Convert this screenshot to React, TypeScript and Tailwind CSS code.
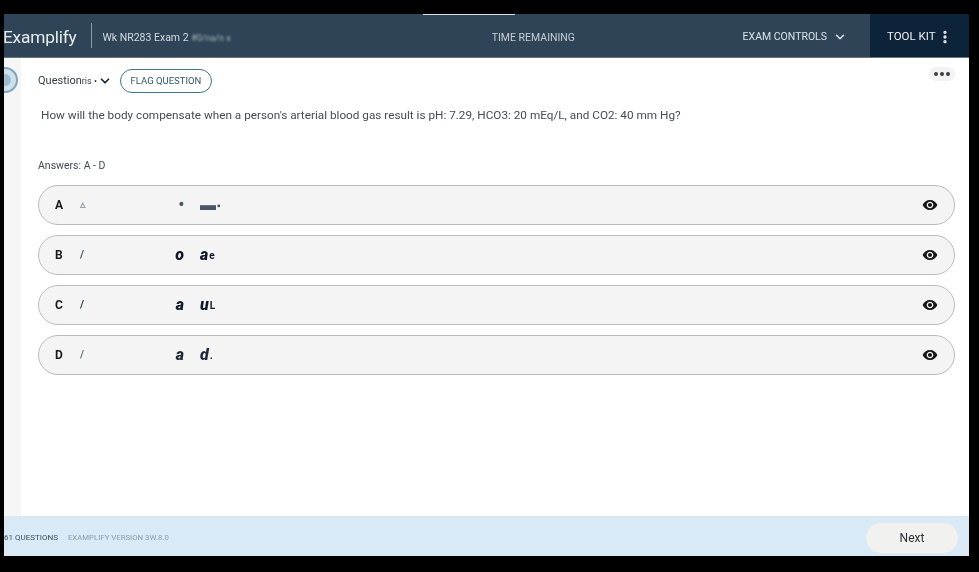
import { ChevronDown, EllipsisVertical } from "lucide-react";

const rows = [
  { l: "A", m: "▵", a: "•", b: "▬", c: "▪", mc: "text-gray-400", sm: "text-gray-600" },
  { l: "B", m: "/", a: "o", b: "a", c: "e", mc: "text-gray-600", sm: "text-gray-900" },
  { l: "C", m: "/", a: "a", b: "u", c: "L", mc: "text-gray-700", sm: "text-gray-900" },
  { l: "D", m: "/", a: "a", b: "d", c: ".", mc: "text-gray-500", sm: "text-gray-800" },
];

function EyeIcon() {
  return (
    <svg className="ml-auto w-[16px] h-[16px] text-[#161616]" viewBox="0 0 24 24" fill="currentColor">
      <path d="M12 4.5C7 4.5 2.73 7.61 1 12c1.73 4.39 6 7.5 11 7.5s9.27-3.11 11-7.5c-1.73-4.39-6-7.5-11-7.5zM12 17c-2.76 0-5-2.24-5-5s2.24-5 5-5 5 2.24 5 5-2.24 5-5 5zm0-8c-1.66 0-3 1.34-3 3s1.34 3 3 3 3-1.34 3-3-1.34-3-3-3z" />
    </svg>
  );
}

function Row({ r }: { r: (typeof rows)[number] }) {
  return (
    <div className="h-10 rounded-[20px] border border-[#b9bcbc] bg-[#f4f4f4] flex items-center pl-[16px] pr-[16px] text-[#1a1a1a]">
      <span className="w-[25px] text-[12px] font-bold">{r.l}</span>
      <span className={`w-[85px] text-[11px] font-bold blur-[0.6px] ${r.mc}`}>{r.m}</span>
      <span className={`w-[19px] text-right text-[16px] font-black italic blur-[0.6px] ${r.sm}`}>{r.a}</span>
      <span className={`ml-[16px] text-[16px] font-black italic blur-[0.6px] ${r.sm}`}>{r.b}</span>
      <span className={`ml-[1px] text-[10px] font-bold blur-[0.6px] ${r.sm}`}>{r.c}</span>
      <EyeIcon />
    </div>
  );
}

export default function App() {
  return (
    <div className="w-[979px] h-[572px] bg-black pt-[14px] pl-[4px] pr-[10px] pb-[16px] overflow-hidden font-['Roboto',sans-serif]">
      <div className="w-[965px] h-[542px] bg-white flex flex-col overflow-hidden blur-[0.25px]">
        <header className="h-[44px] shrink-0 bg-[#2f4456] border-b border-[#66757f] flex items-stretch text-white relative">
          <div className="absolute left-[419px] top-0 w-[92px] h-[1px] bg-[#d8dde0]" />
          <span className="ml-[-1px] mt-[10px] text-[17.3px] leading-[26px] font-normal tracking-[-0.2px] text-[#e6ebee]">Examplify</span>
          <div className="ml-[15px] my-[9px] w-px bg-[#8a98a3]" />
          <span className="ml-[10px] mt-[16px] text-[10.5px] leading-[15px] text-[#d5dce1]">
            <span className="blur-[0.5px]">Wk</span> NR283 Exam 2 <span className="blur-[0.8px] text-[#aab6bf] text-[9px]">#0/na/n x</span>
          </span>
          <span className="ml-[261px] mt-[16px] text-[10.5px] leading-[15px] text-[#c5ced5]">TIME REMAINING</span>
          <div className="ml-auto flex items-center gap-[5px] pr-[23px] pt-[2px] text-[#dbe1e6] text-[10.5px]">
            <span>EXAM CONTROLS</span>
            <ChevronDown className="w-[14px] h-[14px] ml-[1px]" strokeWidth={2.5} />
          </div>
          <div className="w-[99px] h-[43px] bg-[#0c2339] flex items-center pl-[17px] pt-[2px] text-[11.5px] text-[#eef1f3]">
            <span>TOOL KIT</span>
            <EllipsisVertical className="w-[16px] h-[16px] ml-[1px]" strokeWidth={3} />
          </div>
        </header>

        <div className="flex-1 flex min-h-0">
          <aside className="w-[17px] shrink-0 bg-[#f6f6f6] overflow-hidden relative">
            <svg className="absolute left-[-13px] top-[7px] blur-[0.6px]" width="28" height="30" viewBox="0 0 28 30">
              <circle cx="14" cy="15" r="12" fill="#cfe0ea" stroke="#7fa5bb" strokeWidth="2" />
              <circle cx="14" cy="15" r="6" fill="#9dbccd" />
            </svg>
          </aside>
          <main className="flex-1 min-w-0 pl-[17px] pr-[14px] relative">
            <div className="flex items-center h-[24px] mt-[11px]">
              <span className="text-[11px] text-[#333b42]">Question<span className="blur-[0.5px] text-[9px]">ris •</span></span>
              <ChevronDown className="w-[14px] h-[14px] ml-[1px] text-[#1a2530]" strokeWidth={3} />
              <button className="ml-[8px] h-[24px] w-[92px] rounded-full border border-[#3f7390] text-[9.5px] text-[#33566c] bg-white">FLAG QUESTION</button>
            </div>
            <div className="absolute right-[14px] top-[9px] h-[14px] w-[26px] rounded-full bg-[#f3f3f3] flex items-center justify-center gap-[2px]">
              <span className="w-[4px] h-[4px] rounded-full bg-[#3a3f45]" />
              <span className="w-[4px] h-[4px] rounded-full bg-[#3a3f45]" />
              <span className="w-[4px] h-[4px] rounded-full bg-[#3a3f45]" />
            </div>
            <p className="mt-[13px] ml-[3px] text-[11.75px] leading-[18px] text-[#454c52]">
              How will the body compensate when a person's arterial blood gas result is pH: 7.29, HCO3: 20 mEq/L, and CO2: 40 mm Hg?
            </p>
            <p className="mt-[35px] text-[10.5px] leading-[14px] text-[#444c52]">Answers: A - D</p>
            <div className="mt-[12px] flex flex-col gap-[10px]">
              {rows.map((r) => (
                <Row key={r.l} r={r} />
              ))}
            </div>
          </main>
        </div>

        <footer className="h-[40px] shrink-0 bg-[#d9e9f5] flex items-center pt-[4px] pr-[11px]">
          <span className="text-[8px] text-[#3d4f5c]">61 QUESTIONS</span>
          <span className="ml-[10px] text-[7.8px] text-[#8d9ba6]">EXAMPLIFY VERSION 3W.8.0</span>
          <button className="ml-auto w-[92px] h-[30px] rounded-full bg-[#f1f1ef] text-[12px] text-[#2c3135]">Next</button>
        </footer>
      </div>
    </div>
  );
}
